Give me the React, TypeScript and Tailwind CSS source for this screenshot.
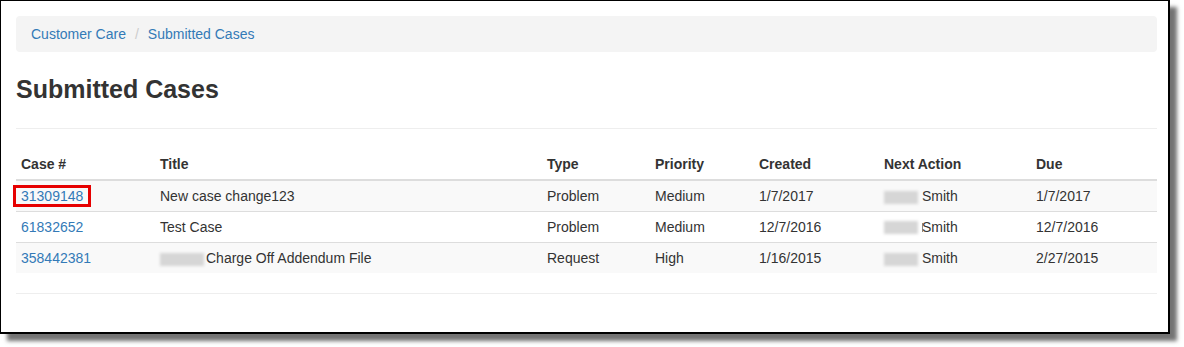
import React from 'react'

const rows = [
  { id: '31309148', title: 'New case change123', type: 'Problem', priority: 'Medium', created: '1/7/2017', due: '1/7/2017', marked: true },
  { id: '61832652', title: 'Test Case', type: 'Problem', priority: 'Medium', created: '12/7/2016', due: '12/7/2016', cut: true },
  { id: '358442381', title: 'Charge Off Addendum File', type: 'Request', priority: 'High', created: '1/16/2015', due: '2/27/2015', hiddenPrefix: true },
]

function Blur({ w }: { w: string }) {
  return <span className={`inline-block h-[13px] ${w} bg-[#d6d6d6] blur-[1.5px] align-middle`} />
}

const cell = 'h-[31px] px-[5px] py-0 align-middle whitespace-nowrap'

export default function App() {
  return (
    <div className="w-[1184px] h-[347px] bg-white font-['Liberation_Sans',Arial,sans-serif] text-[14px] leading-[20px] text-[#333]">
      <div className="w-[1170px] h-[334px] border-t border-l border-r-2 border-b-2 border-black bg-white shadow-[7px_7px_4px_rgba(0,0,0,0.55)] pl-[15px] pr-[11px] pt-[15px]">
        {/* Breadcrumb */}
        <div className="h-[36px] rounded-[4px] bg-[#f4f4f4] px-[15px] flex items-center">
          <a className="text-[#337ab7]">Customer Care</a>
          <span className="px-[9px] text-[#ccc]">/</span>
          <a className="text-[#337ab7]">Submitted Cases</a>
        </div>

        <h1 className="mt-[24px] text-[25px] leading-[27px] font-bold">Submitted Cases</h1>
        <hr className="mt-[25px] mb-[20px] border-[#eee]" />

        <table className="w-full border-collapse table-fixed">
          <colgroup>
            <col className="w-[139px]" />
            <col className="w-[387px]" />
            <col className="w-[108px]" />
            <col className="w-[104px]" />
            <col className="w-[125px]" />
            <col className="w-[152px]" />
            <col />
          </colgroup>
          <thead>
            <tr className="border-b-2 border-[#ddd]">
              {['Case #', 'Title', 'Type', 'Priority', 'Created', 'Next Action', 'Due'].map((h) => (
                <th key={h} className={`${cell} text-left font-bold`}>{h}</th>
              ))}
            </tr>
          </thead>
          <tbody>
            {rows.map((r, i) => (
              <tr key={r.id} className={`${i > 0 ? 'border-t border-[#ddd]' : ''} ${i % 2 === 0 ? 'bg-[#f9f9f9]' : 'bg-white'}`}>
                <td className={cell}>
                  <span className="relative text-[#337ab7]">
                    {r.id}
                    {r.marked && (
                      <span className="absolute left-[-8px] right-[-8px] top-[-3px] bottom-[-3px] border-[3px] border-[#e60000]" />
                    )}
                  </span>
                </td>
                <td className={cell}>
                  {r.hiddenPrefix && <><Blur w="w-[44px]" /><span className="pl-[2px]" /></>}
                  {r.title}
                </td>
                <td className={cell}>{r.type}</td>
                <td className={cell}>{r.priority}</td>
                <td className={cell}>{r.created}</td>
                <td className={cell}>
                  <span className="inline-block w-[38px] pr-[4px] text-right">
                    <Blur w="w-[34px]" />
                  </span>
                  {r.cut && <span className="inline-block w-[1px] h-[9px] bg-[#888] align-middle mr-[-1px]" />}
                  Smith
                </td>
                <td className={cell}>{r.due}</td>
              </tr>
            ))}
          </tbody>
        </table>

        <hr className="mt-[20px] border-[#eee]" />
      </div>
    </div>
  )
}
